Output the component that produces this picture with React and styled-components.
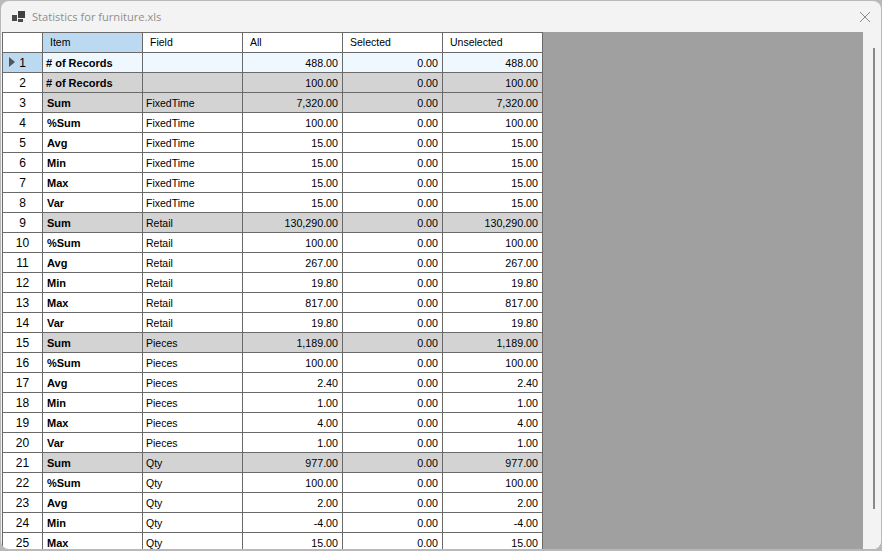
import React from "react";
import styled, { createGlobalStyle } from "styled-components";

const GlobalStyle = createGlobalStyle`
  html, body {
    margin: 0;
    padding: 0;
    width: 882px;
    height: 551px;
    overflow: hidden;
    background: #b9b9b9;
  }
`;

const Window = styled.div`
  box-sizing: border-box;
  margin: 1px 0 0 1px;
  width: 880px;
  height: 548px;
  background: #f3f3f3;
  border-radius: 8px;
  overflow: hidden;
  display: flex;
  flex-direction: column;
  font-family: "Liberation Sans", Arial, sans-serif;
`;

const TitleBar = styled.div`
  height: 31px;
  flex: none;
  display: flex;
  align-items: center;
  padding: 0 10px 0 11px;
  gap: 7px;
  color: #8f8f8f;
  font-family: "Open Sans", sans-serif;
  font-size: 11.1px;
`;

const TitleText = styled.span`
  flex: 1;
`;

const Body = styled.div`
  flex: 1;
  display: flex;
  min-height: 0;
  padding-left: 1px;
`;

const GridArea = styled.div`
  width: 861px;
  background: #a0a0a0;
  overflow: hidden;
`;

const Table = styled.div`
  display: grid;
  grid-template-columns: 40px repeat(5, 100px);
  grid-auto-rows: 20px;
  width: 540px;
  border-left: 1px solid #696969;
  border-top: 1px solid #696969;
  box-sizing: content-box;
  font-size: 11px;
  color: #000;
`;

const Cell = styled.div`
  box-sizing: border-box;
  border-right: 1px solid #696969;
  border-bottom: 1px solid #696969;
  display: flex;
  align-items: center;
  white-space: nowrap;
  overflow: hidden;
  background: ${(p) => (p.$summary ? "#d3d3d3" : p.$active ? "#f0f8ff" : "#fff")};
`;

const HeaderCell = styled(Cell)`
  background: ${(p) => (p.$active ? "#bbdaf2" : "#fff")};
  padding: 0 0 2px 7px;
  font-size: 10.5px;
`;

const RowHead = styled(Cell)`
  justify-content: center;
  position: relative;
  background: ${(p) => (p.$active ? "#bbdaf2" : "#fff")};
  font-size: 12px;
`;

const Pointer = styled.span`
  position: absolute;
  left: 6px;
  top: 4px;
  width: 0;
  height: 0;
  border-top: 5px solid transparent;
  border-bottom: 5px solid transparent;
  border-left: 6px solid #555;
`;

const ItemCell = styled(Cell)`
  font-weight: bold;
  padding-left: ${(p) => (p.$indent ? 4 : 3)}px;
`;

const FieldCell = styled(Cell)`
  padding-left: 3px;
  font-size: 10.5px;
`;

const NumCell = styled(Cell)`
  justify-content: flex-end;
  padding-right: 4px;
  font-size: 10.7px;
`;

const ScrollTrack = styled.div`
  flex: 1;
  background: #f3f3f3;
  position: relative;
`;

const ScrollThumb = styled.div`
  position: absolute;
  left: 10px;
  top: 16px;
  width: 2px;
  height: 461px;
  background: #8a8a8a;
`;

const headers = ["Item", "Field", "All", "Selected", "Unselected"];

const stats = (field, sum, avg, min, max, variance) => [
  ["Sum", field, sum],
  ["%Sum", field, "100.00"],
  ["Avg", field, avg],
  ["Min", field, min],
  ["Max", field, max],
  ["Var", field, variance],
];

const rows = [
  ["# of Records", "", "488.00"],
  ["# of Records", "", "100.00"],
  ...stats("FixedTime", "7,320.00", "15.00", "15.00", "15.00", "15.00"),
  ...stats("Retail", "130,290.00", "267.00", "19.80", "817.00", "19.80"),
  ...stats("Pieces", "1,189.00", "2.40", "1.00", "4.00", "1.00"),
  ...stats("Qty", "977.00", "2.00", "-4.00", "15.00", "").slice(0, 5),
];

const WindowIcon = () => (
  <svg width="13" height="12" viewBox="0 0 13 12">
    <rect x="0" y="4" width="5" height="6" fill="#4a4a4a" />
    <rect x="6" y="0" width="7" height="7" fill="#404040" />
    <rect x="6" y="8" width="5" height="3" fill="#4a4a4a" />
  </svg>
);

const CloseIcon = () => (
  <svg width="12" height="12" viewBox="0 0 12 12">
    <path d="M1 1L11 11M11 1L1 11" stroke="#8a8a8a" strokeWidth="1" fill="none" />
  </svg>
);

export default function App() {
  return (
    <>
      <GlobalStyle />
      <Window>
        <TitleBar>
          <WindowIcon />
          <TitleText>Statistics for furniture.xls</TitleText>
          <CloseIcon />
        </TitleBar>
        <Body>
          <GridArea>
            <Table>
              <Cell />
              {headers.map((h, i) => (
                <HeaderCell key={h} $active={i === 0}>{h}</HeaderCell>
              ))}
              {rows.map((r, i) => {
                const active = i === 0;
                const summary = i === 1 || r[0] === "Sum";
                return (
                  <React.Fragment key={i}>
                    <RowHead $active={active}>
                      {active && <Pointer />}
                      {i + 1}
                    </RowHead>
                    <ItemCell $active={active} $summary={summary} $indent={r[0] !== "# of Records"}>{r[0]}</ItemCell>
                    <FieldCell $active={active} $summary={summary}>{r[1]}</FieldCell>
                    <NumCell $active={active} $summary={summary}>{r[2]}</NumCell>
                    <NumCell $active={active} $summary={summary}>0.00</NumCell>
                    <NumCell $active={active} $summary={summary}>{r[2]}</NumCell>
                  </React.Fragment>
                );
              })}
            </Table>
          </GridArea>
          <ScrollTrack>
            <ScrollThumb />
          </ScrollTrack>
        </Body>
      </Window>
    </>
  );
}
